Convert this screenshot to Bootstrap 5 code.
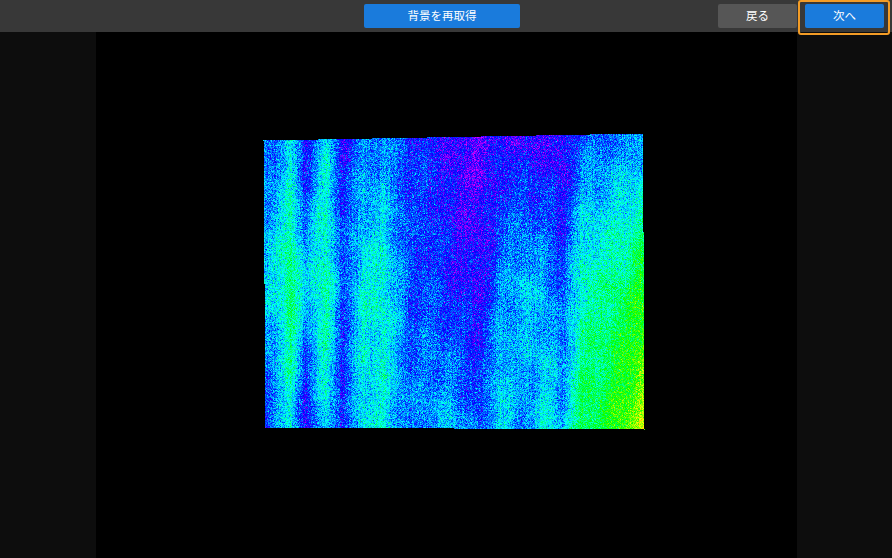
<!DOCTYPE html>
<html lang="ja">
<head>
    <meta charset="UTF-8">
    <meta name="viewport" content="width=device-width, initial-scale=1.0">
    <title>背景を再取得</title>
    <link href="https://cdn.jsdelivr.net/npm/bootstrap@5.3.0/dist/css/bootstrap.min.css" rel="stylesheet">
    <style>
        html, body { height: 100%; overflow: hidden; background: #000; }
        body { font-family: "Liberation Sans", "Noto Sans CJK JP", sans-serif; }
        .top-bar { height: 32px; background: #383838; padding-left: 364px; padding-right: 8px; }
        .bar-btn { height: 24px; padding: 0; font-size: 11.5px; line-height: 24px; color: #fff; border: 0; border-radius: 2px; }
        .btn-refetch { width: 156px; background: #1a7bdc; }
        .btn-back { width: 79px; background: #565656; }
        .btn-next { width: 79px; background: #1a7bdc; }
        .next-wrap { position: relative; }
        .next-wrap::after { content: ""; position: absolute; left: -7px; right: -6px; top: -4px; bottom: -7px; border: 2px solid #f39c26; border-radius: 3px; pointer-events: none; }
        .side-panel { width: 96px; background: #0d0d0d; }
        .side-panel-right { width: 95px; }
        .view-row { height: 526px; }
        #depthView { display: block; width: 701px; height: 526px; }
    </style>
</head>
<body>
    <div class="top-bar d-flex align-items-center">
        <button type="button" class="btn bar-btn btn-refetch">背景を再取得</button>
        <div class="ms-auto d-flex gap-2">
            <button type="button" class="btn bar-btn btn-back">戻る</button>
            <div class="next-wrap">
                <button type="button" class="btn bar-btn btn-next">次へ</button>
            </div>
        </div>
    </div>
    <div class="view-row d-flex">
        <div class="side-panel"></div>
        <div class="flex-grow-1">
            <canvas id="depthView" width="701" height="526"></canvas>
        </div>
        <div class="side-panel side-panel-right"></div>
    </div>

    <script src="https://cdn.jsdelivr.net/npm/bootstrap@5.3.0/dist/js/bootstrap.bundle.min.js"></script>
    <script>
        // depth map: hue per x at three heights, plus noise
        var xs     = [263, 275, 290, 305, 325, 342, 362, 385, 410, 430, 450, 480, 500, 520, 545, 562, 580, 600, 625, 644];
        var hueTop = [215, 212, 190, 245, 180, 240, 212, 212, 232, 238, 252, 262, 245, 252, 252, 258, 222, 215, 212, 208];
        var hueMid = [192, 180, 142, 190, 155, 222, 178, 172, 226, 226, 240, 246, 212, 192, 202, 226, 168, 160, 148, 122];
        var hueBot = [232, 212, 180, 250, 180, 238, 180, 180, 214, 204, 195, 225, 175, 214, 180, 195, 140, 130, 105,  75];

        function lookup(table, x) {
            for (var i = 1; i < xs.length; i++) {
                if (x <= xs[i]) {
                    var t = (x - xs[i - 1]) / (xs[i] - xs[i - 1]);
                    return table[i - 1] + (table[i] - table[i - 1]) * t;
                }
            }
            return table[table.length - 1];
        }

        var seed = 12345;
        function rnd() {
            seed = (seed * 1664525 + 1013904223) % 4294967296;
            return seed / 4294967296;
        }

        function hueToRgb(h) {
            var c = function (n) {
                var k = (n + h / 60) % 6;
                return Math.round(255 * (1 - Math.max(0, Math.min(k, 4 - k, 1))));
            };
            return [c(5), c(3), c(1)];
        }

        function drawDepth() {
            var canvas = document.getElementById('depthView');
            var ctx = canvas.getContext('2d');
            var img = ctx.createImageData(canvas.width, canvas.height);
            var offX = 96, offY = 32;

            // thin vertical streaks
            var streak = [];
            for (var s = 0; s < 400; s++) streak.push((rnd() - 0.5) * 14);

            for (var py = 133; py < 430; py++) {
                for (var px = 263; px < 645; px++) {
                    var u = (px - 263) / 381;
                    var edgeTop = 140 - 7 * u;
                    var edgeBottom = 427 + 2 * u;
                    var v = (py - edgeTop) / (edgeBottom - edgeTop);
                    var edgeLeft = 263 + 2 * v;
                    var edgeRight = 642.5 + 1.5 * v;
                    if (v < 0 || v > 1 || px < edgeLeft || px > edgeRight) continue;

                    var base;
                    if (v < 0.5) {
                        var a = lookup(hueTop, px), b = lookup(hueMid, px);
                        base = a + (b - a) * v * 2;
                    } else {
                        var a2 = lookup(hueMid, px), b2 = lookup(hueBot, px);
                        base = a2 + (b2 - a2) * (v - 0.5) * 2;
                    }
                    var mottle = 5 * Math.sin(px * 0.19 + py * 0.035) + 4 * Math.sin(px * 0.07 - py * 0.11);
                    var noise = (rnd() + rnd() + rnd() - 1.5) * 34;
                    if (rnd() < 0.03) noise += (rnd() - 0.5) * 60;
                    var hue = Math.max(50, Math.min(292, base + mottle + streak[px - 263] + noise));
                    var rgb = hueToRgb(hue);
                    var n = ((py - offY) * canvas.width + (px - offX)) * 4;
                    img.data[n] = rgb[0];
                    img.data[n + 1] = rgb[1];
                    img.data[n + 2] = rgb[2];
                    img.data[n + 3] = 255;
                }
            }
            ctx.putImageData(img, 0, 0);
        }
        drawDepth();
    </script>
</body>
</html>
